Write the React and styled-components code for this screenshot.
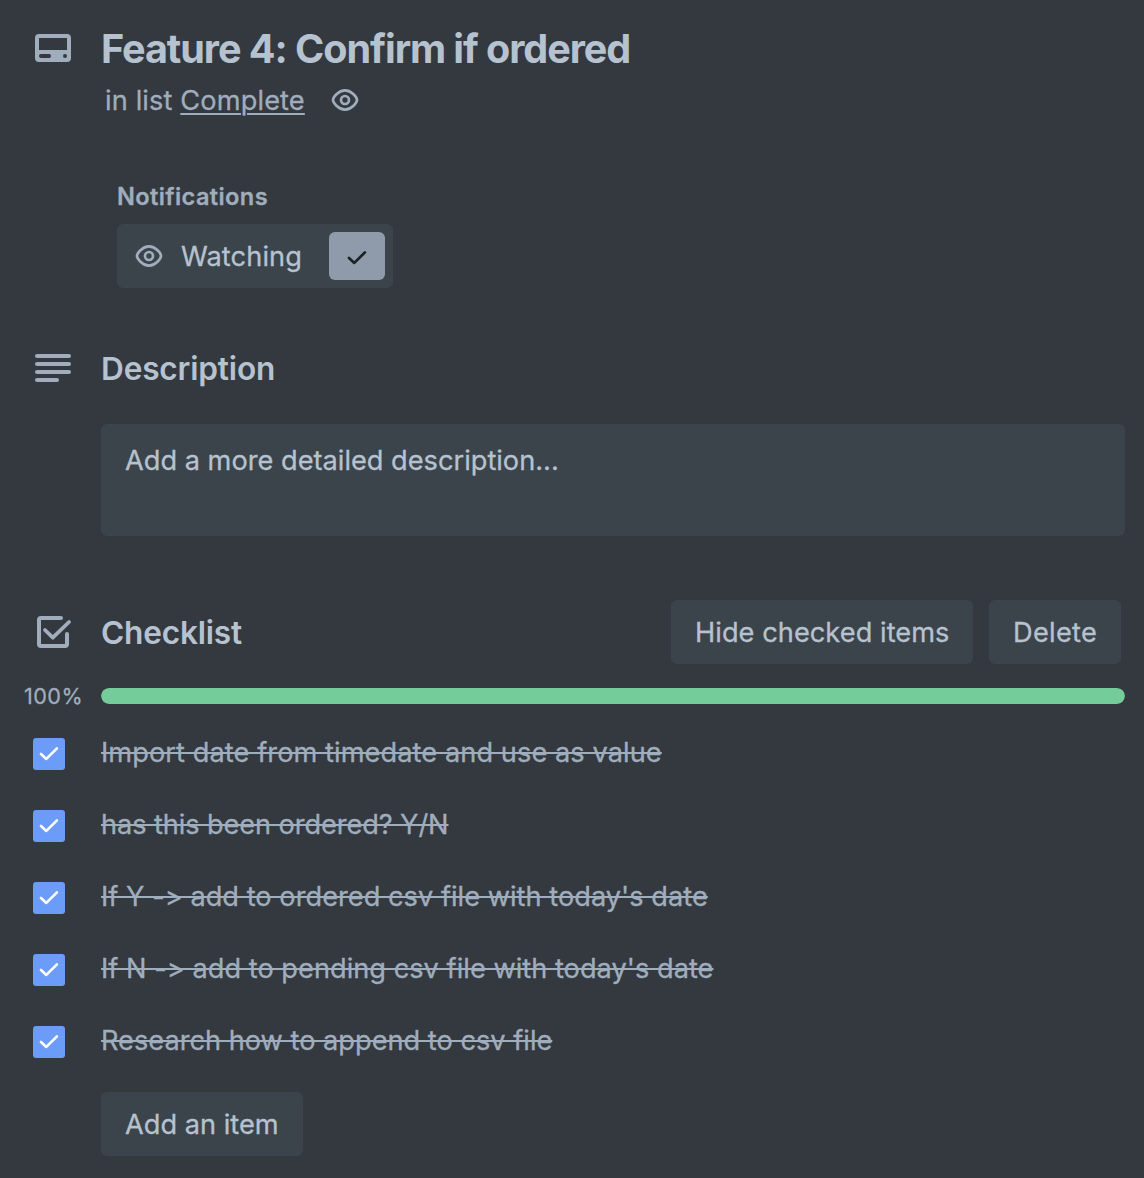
import React from "react";
import styled, { createGlobalStyle } from "styled-components";

const GlobalStyle = createGlobalStyle`
  *, *::before, *::after { box-sizing: border-box; }
  body {
    margin: 0;
    background: #34383f;
    color: #b6c2cf;
    font-family: Inter, "Liberation Sans", sans-serif;
    font-size: 27.2px;
    font-feature-settings: "calt" 0;
    -webkit-text-stroke: 0.3px currentColor;
  }
  h1, h2, h3, p, ul { margin: 0; padding: 0; }
  svg { display: block; flex: none; }
`;

const Card = styled.main`
  display: flex;
  flex-direction: column;
  width: 1144px;
  height: 1178px;
  padding: 24px 19px 0 0;
  overflow: hidden;
`;

const Section = styled.section`
  display: grid;
  grid-template-columns: 101px minmax(0, 1fr);
  margin-top: ${(p) => p.$top || 0}px;
`;

const Gutter = styled.div`
  padding: ${(p) => p.$top || 0}px 0 0 ${(p) => p.$left}px;
  color: #9fadbc;
`;

const Label = styled.span`
  display: inline-block;
  white-space: nowrap;
  letter-spacing: ${(p) => p.$track || 0}px;
`;

const Title = styled.h1`
  height: 48px;
  font-size: 39.6px;
  line-height: 50px;
  font-weight: 650;
  -webkit-text-stroke: 0;
`;

const ListLine = styled.p`
  display: flex;
  align-items: center;
  height: 40px;
  margin-top: 8px;
  padding-left: 4px;
  color: #9fadbc;
  white-space: pre;

  svg { margin-left: 26px; }
`;

const ListLink = styled.a`
  text-decoration: underline;
  text-decoration-thickness: 2px;
  text-underline-offset: 3px;
`;

const Notifications = styled.div`
  display: flex;
  flex-direction: column;
  align-items: flex-start;
  margin: 60px 0 0 16px;
`;

const SmallHeading = styled.h3`
  height: 44px;
  color: #9fadbc;
  font-size: 23.6px;
  line-height: 34px;
  font-weight: 600;
`;

const Button = styled.button`
  display: flex;
  align-items: center;
  justify-content: flex-start;
  width: ${(p) => p.$width}px;
  height: 64px;
  padding: 0 0 0 ${(p) => p.$pad ?? 24}px;
  border: 0;
  border-radius: 6px;
  background: #3c444b;
  color: #b6c2cf;
  font: inherit;
  font-feature-settings: inherit;
`;

const WatchIcon = styled.span`
  color: #9fadbc;
`;

const WatchText = styled.span`
  width: 148px;
  margin-left: 18px;
  text-align: left;
`;

const WatchBadge = styled.span`
  display: grid;
  place-items: center;
  width: 56px;
  height: 48px;
  padding-top: 3px;
  border-radius: 6px;
  background: #8f9bab;
  color: #1d2125;
`;

const Heading = styled.h2`
  height: 40px;
  font-size: 31.6px;
  line-height: 42px;
  font-weight: 640;
  -webkit-text-stroke: 0;
`;

const DescriptionBox = styled.div`
  height: 112px;
  margin-top: 36px;
  padding: 17px 24px;
  border-radius: 6px;
  background: #3c444b;
  line-height: 40px;
`;

const ChecklistHead = styled.div`
  display: flex;
  align-items: center;
  gap: 16px;
  height: 64px;
  padding-right: 4px;

  h2 { margin-right: auto; }
`;

const Percent = styled.div`
  padding-left: 24px;
  color: #9fadbc;
  font-size: 21.6px;
  line-height: 32px;
`;

const Track = styled.div`
  align-self: center;
  height: 16px;
  border-radius: 8px;
  background: #3c444b;
  overflow: hidden;
`;

const Fill = styled.div`
  width: ${(p) => p.$value}%;
  height: 100%;
  border-radius: 8px;
  background: #75cc9b;
`;

const Items = styled.ul`
  margin-top: 4px;
  list-style: none;
`;

const Item = styled.li`
  display: grid;
  grid-template-columns: 68px 1fr;
  align-items: start;
  height: 72px;
  padding: 17px 0 0 33px;
  color: #9fadbc;
  line-height: 40px;
`;

const Box = styled.span`
  display: block;
  width: 32px;
  height: 32px;
  margin-top: 5px;
  border-radius: 3px;
  background: #6a9cf8;
  color: #fff;
`;

const Struck = styled(Label)`
  text-decoration: line-through;
  text-decoration-thickness: 2px;
`;

const Footer = styled.div`
  padding: 0 0 0 101px;
  margin-top: 16px;
`;

const CardIcon = () => (
  <svg width="36" height="28" viewBox="0 0 36 28">
    <path
      fill="currentColor"
      fillRule="evenodd"
      d="M4 0H32A4 4 0 0 1 36 4V24A4 4 0 0 1 32 28H4A4 4 0 0 1 0 24V4A4 4 0 0 1 4 0ZM4 4V16H32V4ZM6 20A2 2 0 0 0 6 24H14A2 2 0 0 0 14 20ZM30 20A2 2 0 1 0 30 24A2 2 0 1 0 30 20Z"
    />
  </svg>
);

const EyeIcon = () => (
  <svg width="28" height="24" viewBox="0 0 28 24" fill="none" stroke="currentColor" strokeWidth="2.7">
    <path d="M2 12C2 9.6 7.2 2.4 14 2.4S26 9.6 26 12 20.8 21.6 14 21.6 2 14.4 2 12Z" strokeLinejoin="round" />
    <circle cx="14" cy="12" r="4" />
  </svg>
);

const LinesIcon = () => (
  <svg width="36" height="28" viewBox="0 0 36 28" fill="currentColor">
    <rect width="36" height="4" rx="2" />
    <rect y="8" width="36" height="4" rx="2" />
    <rect y="16" width="36" height="4" rx="2" />
    <rect y="24" width="24" height="4" rx="2" />
  </svg>
);

const ChecklistIcon = () => (
  <svg width="36" height="32" viewBox="0 0 36 32" fill="none" stroke="currentColor" strokeWidth="4" strokeLinecap="round" strokeLinejoin="round">
    <path d="M24 2H4Q2 2 2 4V28Q2 30 4 30H28Q30 30 30 28V18" />
    <path d="M8 14L15.8 21.7L32 6" strokeWidth="3.8" />
  </svg>
);

const Tick = ({ size = 32 }) => (
  <svg width={size} height={size} viewBox="0 0 32 32" fill="none" stroke="currentColor" strokeWidth="2.7" strokeLinecap="round" strokeLinejoin="round">
    <path d="M8 16L13.3 20.9L23.9 10.4" />
  </svg>
);

const items = [
  { text: "Import date from timedate and use as value", track: 0.07 },
  { text: "has this been ordered? Y/N", track: -0.1 },
  { text: "If Y -> add to ordered csv file with today's date", track: 0.02 },
  { text: "If N -> add to pending csv file with today's date", track: 0.02 },
  { text: "Research how to append to csv file", track: 0 },
];

export default function App() {
  return (
    <Card>
      <GlobalStyle />
      <Section>
        <Gutter $left={35} $top={10}><CardIcon /></Gutter>
        <div>
          <Title><Label $track={-1.06}>Feature 4: Confirm if ordered</Label></Title>
          <ListLine>
            <Label $track={0.12}>in list <ListLink>Complete</ListLink></Label>
            <EyeIcon />
          </ListLine>
          <Notifications>
            <SmallHeading><Label $track={0.38}>Notifications</Label></SmallHeading>
            <Button $width={276} $pad={18}>
              <WatchIcon><EyeIcon /></WatchIcon>
              <WatchText><Label $track={0.1}>Watching</Label></WatchText>
              <WatchBadge><Tick /></WatchBadge>
            </Button>
          </Notifications>
        </div>
      </Section>

      <Section $top={60}>
        <Gutter $left={35} $top={6}><LinesIcon /></Gutter>
        <div>
          <Heading><Label $track={-0.18}>Description</Label></Heading>
          <DescriptionBox><Label>Add a more detailed description...</Label></DescriptionBox>
        </div>
      </Section>

      <Section $top={64}>
        <Gutter $left={37} $top={16}><ChecklistIcon /></Gutter>
        <ChecklistHead>
          <Heading><Label $track={-0.2}>Checklist</Label></Heading>
          <Button $width={302}><Label $track={0.05}>Hide checked items</Label></Button>
          <Button $width={132}><Label $track={0.3}>Delete</Label></Button>
        </ChecklistHead>
      </Section>

      <Section $top={16}>
        <Percent><Label $track={0.45}>100%</Label></Percent>
        <Track><Fill $value={100} /></Track>
      </Section>

      <Items>
        {items.map((item) => (
          <Item key={item.text}>
            <Box><Tick /></Box>
            <div><Struck $track={item.track}>{item.text}</Struck></div>
          </Item>
        ))}
      </Items>

      <Footer>
        <Button $width={202}><Label>Add an item</Label></Button>
      </Footer>
    </Card>
  );
}
